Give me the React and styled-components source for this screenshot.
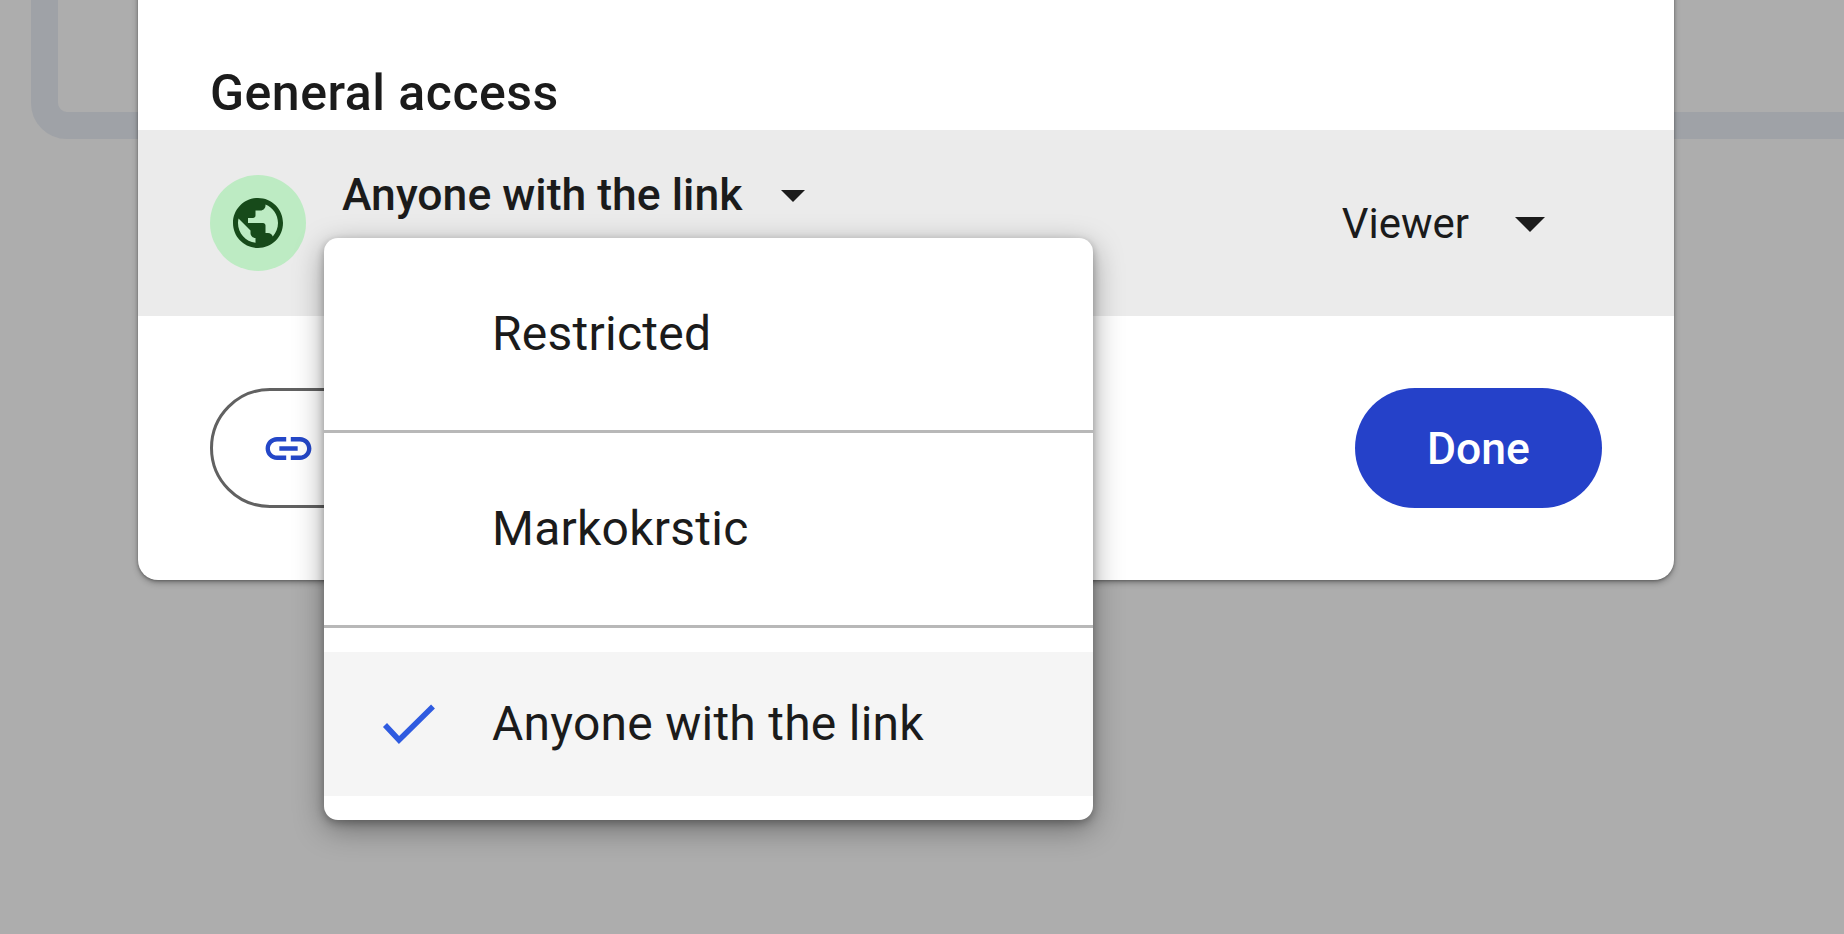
import React from "react";
import styled, { createGlobalStyle } from "styled-components";

const Global = createGlobalStyle`
  html, body { margin: 0; padding: 0; background: #adadad; }
  * { box-sizing: border-box; }
  body { font-family: Roboto, "Noto Sans", "Liberation Sans", sans-serif; color: #1b1b1b; }
`;

const Page = styled.div`
  position: relative;
  width: 100vw;
  height: 100vh;
  overflow: hidden;
  background: #adadad;
`;

const BackFrame = styled.div`
  margin: -200px -100px 0 31px;
  height: 339px;
  border: 27px solid #9fa2a7;
  border-radius: 36px;
`;

const Dialog = styled.div`
  position: absolute;
  left: 138px;
  top: -40px;
  width: 1536px;
  background: #fff;
  border-radius: 20px;
  box-shadow: 0 3px 6px rgba(0, 0, 0, 0.28), 0 1px 3px rgba(0, 0, 0, 0.3);
`;

const Heading = styled.h2`
  margin: 0;
  padding: 103px 72px 7px;
  font: 500 50px/60px Roboto, sans-serif;
  letter-spacing: 0.5px;
`;

const AccessRow = styled.div`
  display: flex;
  align-items: center;
  height: 186px;
  padding: 0 129px 0 72px;
  background: #ebebeb;
`;

const GlobeBadge = styled.div`
  display: flex;
  align-items: center;
  justify-content: center;
  width: 96px;
  height: 96px;
  border-radius: 50%;
  background: #bdebc3;
  color: #174a1a;
`;

const ScopeSelect = styled.div`
  display: flex;
  align-items: center;
  gap: 39px;
  margin: -56px 0 0 36px;
  font: 500 44.5px/60px Roboto, sans-serif;
`;

const RoleSelect = styled.div`
  display: flex;
  align-items: center;
  gap: 46px;
  margin: 1px 0 0 auto;
  font: 400 42px/60px Roboto, sans-serif;
`;

const Caret = styled.span`
  width: 0;
  height: 0;
  margin-top: ${(p) => (p.$large ? "1px" : "2px")};
  border-style: solid;
  border-color: #1b1b1b transparent transparent;
  border-width: ${(p) => (p.$large ? "15px 15px 0" : "12px 12px 0")};
`;

const Footer = styled.div`
  display: flex;
  justify-content: space-between;
  padding: 72px;
`;

const LinkButton = styled.div`
  display: flex;
  align-items: center;
  width: 440px;
  height: 120px;
  padding-left: 48px;
  border: 3px solid #616161;
  border-radius: 60px;
  background: #fff;
  color: #2447c8;
`;

const DoneButton = styled.div`
  display: flex;
  align-items: center;
  justify-content: center;
  width: 247px;
  height: 120px;
  padding-top: 1px;
  border-radius: 60px;
  background: #2541c9;
  color: #fff;
  font: 500 44.5px/60px Roboto, sans-serif;
`;

const Menu = styled.div`
  position: absolute;
  left: 186px;
  top: 278px;
  width: 769px;
  background: #fff;
  border-radius: 14px;
  box-shadow: 0 9px 30px rgba(0, 0, 0, 0.36), 0 3px 9px rgba(0, 0, 0, 0.28);
`;

const MenuGroup = styled.div`
  padding: 24px 0;
`;

const MenuItem = styled.div`
  display: grid;
  grid-template-columns: 168px 1fr;
  align-items: center;
  height: 144px;
  background: ${(p) => (p.$selected ? "#f5f5f5" : "transparent")};
  font: 400 48px/60px Roboto, sans-serif;
  letter-spacing: 0.25px;
`;

const CheckSlot = styled.div`
  display: flex;
  justify-content: flex-start;
  padding-left: 58px;
  color: #2f5be0;
`;

const Divider = styled.div`
  height: 3px;
  background: #b8b8b8;
`;

const Globe = () => (
  <svg width="60" height="60" viewBox="0 0 24 24" fill="currentColor" aria-hidden="true">
    <path d="M12 2C6.48 2 2 6.48 2 12s4.48 10 10 10 10-4.48 10-10S17.52 2 12 2zm-1 17.93c-3.95-.49-7-3.85-7-7.93 0-.62.08-1.21.21-1.79L9 15v1c0 1.1.9 2 2 2v1.93zm6.9-2.54c-.26-.81-1-1.39-1.9-1.39h-1v-3c0-.55-.45-1-1-1H8v-2h2c.55 0 1-.45 1-1V7h2c1.1 0 2-.9 2-2v-.41c2.93 1.19 5 4.06 5 7.41 0 2.08-.8 3.97-2.1 5.39z" />
  </svg>
);

const LinkIcon = () => (
  <svg width="55" height="55" viewBox="0 0 24 24" fill="currentColor" aria-hidden="true">
    <path d="M3.9 12c0-1.71 1.39-3.1 3.1-3.1h4V7H7c-2.76 0-5 2.24-5 5s2.24 5 5 5h4v-1.9H7c-1.71 0-3.1-1.39-3.1-3.1zM8 13h8v-2H8v2zm9-6h-4v1.9h4c1.71 0 3.1 1.39 3.1 3.1s-1.39 3.1-3.1 3.1h-4V17h4c2.76 0 5-2.24 5-5s-2.24-5-5-5z" />
  </svg>
);

const Check = () => (
  <svg width="53" height="40" viewBox="0 0 53 40" fill="none" stroke="currentColor" strokeWidth="5.5" aria-hidden="true">
    <polyline points="3,21 17,36 51,2.5" />
  </svg>
);

export default function App() {
  return (
    <Page>
      <Global />
      <BackFrame />
      <Dialog>
        <Heading>General access</Heading>
        <AccessRow>
          <GlobeBadge>
            <Globe />
          </GlobeBadge>
          <ScopeSelect>
            Anyone with the link
            <Caret />
          </ScopeSelect>
          <RoleSelect>
            Viewer
            <Caret $large />
          </RoleSelect>
        </AccessRow>
        <Footer>
          <LinkButton>
            <LinkIcon />
          </LinkButton>
          <DoneButton>Done</DoneButton>
        </Footer>
        <Menu>
          <MenuGroup>
            <MenuItem>
              <CheckSlot />
              Restricted
            </MenuItem>
          </MenuGroup>
          <Divider />
          <MenuGroup>
            <MenuItem>
              <CheckSlot />
              Markokrstic
            </MenuItem>
          </MenuGroup>
          <Divider />
          <MenuGroup>
            <MenuItem $selected>
              <CheckSlot>
                <Check />
              </CheckSlot>
              Anyone with the link
            </MenuItem>
          </MenuGroup>
        </Menu>
      </Dialog>
    </Page>
  );
}
